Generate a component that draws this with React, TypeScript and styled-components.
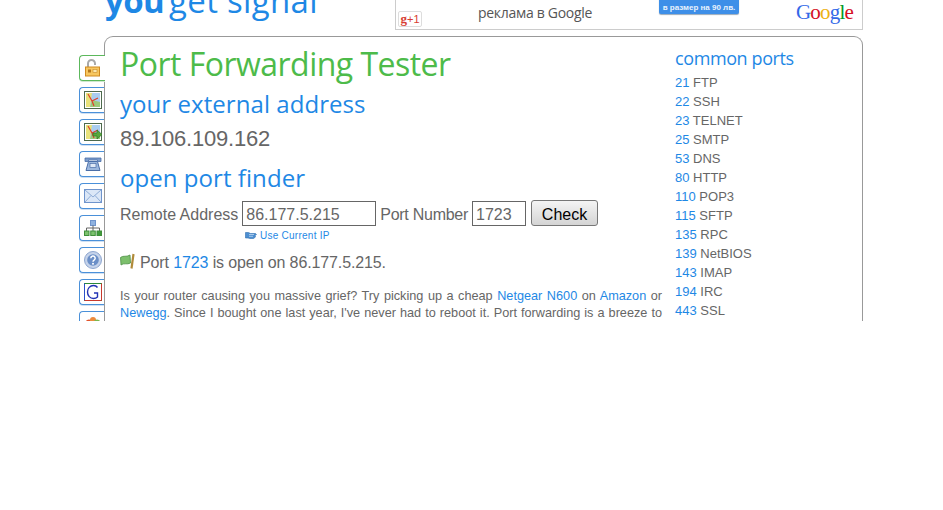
import styled, { createGlobalStyle } from 'styled-components'

const GlobalStyle = createGlobalStyle`
  html, body {
    margin: 0;
    padding: 0;
    background: #fff;
  }
  a {
    color: #1e88e5;
    text-decoration: none;
  }
`

const Page = styled.div`
  width: 943px;
  height: 321px;
  overflow: hidden;
  font-family: "Liberation Sans", Arial, sans-serif;
  color: #666;
`

const Header = styled.header`
  display: flex;
  justify-content: space-between;
  height: 30px;
  margin: 0 80px 6px 105px;
`

const Logo = styled.div`
  font-family: "Open Sans", sans-serif;
  font-size: 33px;
  line-height: 30px;
  margin-top: -14px;
  color: #1e88e5;
  letter-spacing: -0.6px;
  b {
    font-weight: 700;
    margin-right: 5px;
  }
  span {
    font-weight: 400;
    letter-spacing: 0.3px;
  }
`

const AdBox = styled.div`
  position: relative;
  width: 466px;
  height: 29px;
  border: 1px solid #ccc;
  border-top: none;
  overflow: hidden;
  display: flex;
  justify-content: flex-start;
`

const PlusOne = styled.div`
  position: absolute;
  left: 2px;
  bottom: 2px;
  width: 22px;
  height: 14px;
  border: 1px solid #ddd;
  border-radius: 2px;
  font: 400 11px/14px "Liberation Sans", sans-serif;
  color: #d73d32;
  text-align: center;
  b {
    font: 700 13px/14px "Liberation Serif", serif;
  }
`

const AdText = styled.div`
  margin-left: 82px;
  font-family: "Open Sans", sans-serif;
  font-size: 14px;
  line-height: 26px;
  letter-spacing: -0.3px;
  color: #555;
`

const AdButton = styled.div`
  position: absolute;
  left: 263px;
  top: -6px;
  width: 80px;
  height: 20px;
  border-radius: 2px;
  background: #3e8fe8;
  color: #e8f2fd;
  font: 700 8px/21px "Liberation Sans", sans-serif;
  text-align: center;
  box-shadow: 0 1px 1px #9ab;
  span {
    position: relative;
    top: 3px;
  }
`

const GoogleMark = styled.div`
  position: absolute;
  right: 9px;
  top: 0;
  font: 400 21px/24px "Liberation Serif", serif;
  letter-spacing: -0.8px;
`

const GoogleLetter = styled.span<{ $c: string }>`
  color: ${(p) => p.$c};
`

const Body = styled.div`
  display: flex;
  margin-left: 79px;
  width: 784px;
`

const Tabs = styled.nav`
  width: 26px;
  flex: none;
  padding-top: 19px;
  display: flex;
  flex-direction: column;
  gap: 6px;
  margin-right: -1px;
`

const Tab = styled.div<{ $active?: boolean }>`
  box-sizing: border-box;
  width: 26px;
  height: 26px;
  border: 1px solid ${(p) => (p.$active ? '#5cb85c' : '#4a90d9')};
  border-right: none;
  border-radius: 4px 0 0 4px;
  background: #fff;
  display: flex;
  align-items: center;
  justify-content: center;
  box-shadow: 0 1px 0 ${(p) => (p.$active ? '#cfe8cf' : '#cfe0f3')};
  position: relative;
  z-index: ${(p) => (p.$active ? 1 : 0)};
  svg {
    display: block;
  }
`

const Card = styled.main`
  flex: 1;
  min-height: 300px;
  display: flex;
  background: #fff;
  border: 1px solid #999;
  border-bottom: none;
  border-radius: 9px 9px 0 0;
  padding: 0 0 0 15px;
  position: relative;
`

const Content = styled.section`
  width: 542px;
  flex: none;
`

const Title = styled.h1`
  margin: 4px 0 0;
  font-family: "Open Sans", sans-serif;
  font-weight: 400;
  font-size: 32px;
  line-height: 46px;
  letter-spacing: -0.52px;
  color: #4dbb4a;
`

const SectionTitle = styled.h2`
  margin: 0;
  font-family: "Open Sans", sans-serif;
  font-weight: 400;
  font-size: 24px;
  line-height: 34px;
  letter-spacing: 0.06px;
  color: #1e88e5;
`

const Address = styled.div`
  font-size: 22px;
  letter-spacing: -0.2px;
  line-height: 34px;
  margin: 1px 0 5px;
`

const Form = styled.form`
  display: flex;
  align-items: center;
  font-size: 16px;
  height: 28px;
  margin-top: 6px;
`

const TightLabel = styled.span`
  letter-spacing: -0.27px;
`

const Field = styled.input<{ $w: number }>`
  width: ${(p) => p.$w}px;
  height: 25px;
  box-sizing: border-box;
  border: 1px solid #666;
  margin: 0 4px 4px;
  padding: 3px 3px 0;
  font: 16px "Liberation Sans", sans-serif;
  color: #666;
  background: #fff;
  outline: none;
`

const Button = styled.button`
  width: 67px;
  height: 26px;
  margin: 0 0 4px 1px;
  border: 1px solid #777;
  border-radius: 3px;
  background: linear-gradient(#f4f4f4, #d4d4d4);
  font: 16px "Liberation Sans", sans-serif;
  color: #000;
  padding: 3px 0 0;
`

const CurrentIp = styled.a`
  display: flex;
  align-items: center;
  gap: 3px;
  margin: 0 0 0 125px;
  font-size: 10px;
  line-height: 13px;
  letter-spacing: 0.25px;
`

const Result = styled.p`
  display: flex;
  align-items: center;
  margin: 11px 0 0;
  font-size: 16px;
  line-height: 20px;
  letter-spacing: -0.12px;
  white-space: pre;
  svg {
    margin-right: 4px;
    position: relative;
    top: -2px;
  }
`

const Blurb = styled.p`
  margin: 15px 0 0;
  font-size: 12.7px;
  line-height: 17px;
  text-align: justify;
`

const Side = styled.aside`
  margin-left: 13px;
`

const SideTitle = styled.h3`
  margin: 7px 0 1px;
  font-family: "Open Sans", sans-serif;
  font-weight: 400;
  font-size: 18px;
  line-height: 28px;
  letter-spacing: -0.4px;
  color: #1e88e5;
`

const PortList = styled.ul`
  margin: 0;
  padding: 0;
  list-style: none;
  font-size: 13px;
  line-height: 19px;
`

const ports: [number, string][] = [
  [21, 'FTP'],
  [22, 'SSH'],
  [23, 'TELNET'],
  [25, 'SMTP'],
  [53, 'DNS'],
  [80, 'HTTP'],
  [110, 'POP3'],
  [115, 'SFTP'],
  [135, 'RPC'],
  [139, 'NetBIOS'],
  [143, 'IMAP'],
  [194, 'IRC'],
  [443, 'SSL'],
  [445, 'SMB'],
]

const LockIcon = () => (
  <svg width="18" height="18" viewBox="0 0 18 18">
    <path d="M4 8V4.500a3.500 3.500 0 0 1 7 0V6" fill="none" stroke="#a9a9a9" strokeWidth="2" />
    <rect x="1.500" y="8" width="14" height="9" fill="#f7c65f" stroke="#d08a20" />
    <rect x="4" y="10.500" width="3" height="3" fill="#b5761a" />
    <rect x="9" y="10.500" width="4" height="3" fill="#fbe7ae" stroke="#c98a2a" strokeWidth=".6" />
  </svg>
)

const MapIcon = ({ arrow }: { arrow?: boolean }) => (
  <svg width="18" height="18" viewBox="0 0 18 18">
    <rect x=".5" y=".5" width="17" height="17" fill="#fff" stroke="#4d6a4d" />
    <rect x="2" y="2" width="14" height="14" fill="#a9cdf0" />
    <path d="M2 2h6l-2 14H2z" fill="#e8e27a" />
    <path d="M8 9l8 2v5H6z" fill="#9ccb7a" />
    <path d="M4 3l4 7 2 5M8 10l6-3" fill="none" stroke="#e0402a" strokeWidth="1.2" />
    {arrow && <path d="M9 10h4V7l5 4.500-5 4.500v-3H9z" fill="#57a83c" stroke="#2f7a22" strokeWidth=".7" />}
  </svg>
)

const PhoneIcon = () => (
  <svg width="18" height="18" viewBox="0 0 18 18">
    <path d="M1 3h16v3.500h-3.500V5h-9v1.500H1z" fill="#7c9ccc" stroke="#4a6ea8" strokeWidth=".8" />
    <path d="M4.500 6.500h9L16 15.500H2z" fill="#9db8de" stroke="#4a6ea8" />
    <rect x="6" y="8.500" width="6" height="4" fill="#dfe9f6" stroke="#4a6ea8" strokeWidth=".7" />
  </svg>
)

const MailIcon = () => (
  <svg width="18" height="14" viewBox="0 0 18 14">
    <rect x=".5" y=".5" width="17" height="13" fill="#dbe7f7" stroke="#6f94cc" />
    <path d="M1 1l8 7 8-7M1 13l6-6.500M17 13l-6-6.500" fill="none" stroke="#8fadd8" />
  </svg>
)

const NetworkIcon = () => (
  <svg width="18" height="16" viewBox="0 0 18 16">
    <rect x="6.500" y=".5" width="5" height="5" fill="#8fb2e0" stroke="#6f94cc" />
    <path d="M9 5.500V8M2.500 11V8h13v3M9 8v3" fill="none" stroke="#666" />
    <rect x=".5" y="11" width="4.500" height="4.500" fill="#7cc26e" stroke="#3f8f3a" />
    <rect x="6.750" y="11" width="4.500" height="4.500" fill="#7cc26e" stroke="#3f8f3a" />
    <rect x="13" y="11" width="4.500" height="4.500" fill="#3f9a3a" stroke="#3f8f3a" />
  </svg>
)

const HelpIcon = () => (
  <svg width="18" height="18" viewBox="0 0 18 18">
    <circle cx="9" cy="9" r="8.500" fill="#c5d3ea" stroke="#8ea6cf" />
    <circle cx="9" cy="9" r="5.800" fill="#6b8fc7" />
    <path d="M6.800 7.200a2.200 2.200 0 1 1 3.300 1.900c-.8.500-1.100.8-1.100 1.600" fill="none" stroke="#fff" strokeWidth="1.500" />
    <circle cx="9" cy="12.700" r="1" fill="#fff" />
  </svg>
)

const GoogleIcon = () => (
  <svg width="18" height="18" viewBox="0 0 18 18">
    <rect x=".5" y=".5" width="17" height="17" fill="#fff" stroke="#2b8a3a" />
    <path d="M.5 17.500V.5" fill="none" stroke="#2a50c8" />
    <path d="M17.500 .5V17.500H.5" fill="none" stroke="#c93a2e" />
    <path d="M13.500 4.500C12.500 3 11 2.500 9.500 2.500 6 2.500 3.500 5.300 3.500 9s2.500 6.500 6 6.500c1.500 0 3-.5 4-1.500V10H10" fill="none" stroke="#2233b5" strokeWidth="1.400" />
  </svg>
)

const AppsIcon = () => (
  <svg width="18" height="18" viewBox="0 0 18 18">
    <circle cx="5" cy="8" r="3.500" fill="#e2542c" />
    <circle cx="9" cy="5" r="3" fill="#ec8a3c" />
    <circle cx="13" cy="8" r="3.500" fill="#7cb84e" />
  </svg>
)

const FlagIcon = () => (
  <svg width="16" height="17" viewBox="0 0 16 17">
    <path d="M.5 4.500C3.500 2 6 4.500 10 2l.5 8C7 12 4 9.500 1 12z" fill="#7cbf6c" stroke="#4c8f45" strokeWidth=".8" />
    <path d="M13.500 1L11.500 15.500" stroke="#b08a3a" strokeWidth="2.200" />
  </svg>
)

const HandIcon = () => (
  <svg width="12" height="9" viewBox="0 0 12 9">
    <path d="M.5 1.500h3l2 1h5l1 1-1.500 1 .5 1.500-2 1.500H5L3 7H.5z" fill="#4d8fd1" stroke="#2f6fb0" strokeWidth=".6" />
    <path d="M4 3.500h5M4 5.300h4" stroke="#cfe3f7" strokeWidth=".7" />
  </svg>
)

const tabs = [
  <LockIcon key="lock" />,
  <MapIcon key="map" />,
  <MapIcon key="map-arrow" arrow />,
  <PhoneIcon key="phone" />,
  <MailIcon key="mail" />,
  <NetworkIcon key="net" />,
  <HelpIcon key="help" />,
  <GoogleIcon key="google" />,
  <AppsIcon key="apps" />,
]

const App = () => (
  <Page>
    <GlobalStyle />
    <Header>
      <Logo>
        <b>you</b>
        <span>get signal</span>
      </Logo>
      <AdBox>
        <PlusOne>
          <b>g</b>+1
        </PlusOne>
        <AdText>реклама в Google</AdText>
        <AdButton>
          <span>в размер на 90 лв.</span>
        </AdButton>
        <GoogleMark>
          <GoogleLetter $c="#3369e8">G</GoogleLetter>
          <GoogleLetter $c="#d50f25">o</GoogleLetter>
          <GoogleLetter $c="#eeb211">o</GoogleLetter>
          <GoogleLetter $c="#3369e8">g</GoogleLetter>
          <GoogleLetter $c="#009925">l</GoogleLetter>
          <GoogleLetter $c="#d50f25">e</GoogleLetter>
        </GoogleMark>
      </AdBox>
    </Header>
    <Body>
      <Tabs>
        {tabs.map((icon, i) => (
          <Tab key={i} $active={i === 0}>
            {icon}
          </Tab>
        ))}
      </Tabs>
      <Card>
        <Content>
          <Title>Port Forwarding Tester</Title>
          <SectionTitle>your external address</SectionTitle>
          <Address>89.106.109.162</Address>
          <SectionTitle>open port finder</SectionTitle>
          <Form>
            Remote Address
            <Field $w={134} defaultValue="86.177.5.215" />
            <TightLabel>Port Number</TightLabel>
            <Field $w={54} defaultValue="1723" />
            <Button type="button">Check</Button>
          </Form>
          <CurrentIp href="#">
            <HandIcon />
            Use Current IP
          </CurrentIp>
          <Result>
            <FlagIcon />
            Port <a href="#">1723</a> is open on 86.177.5.215.
          </Result>
          <Blurb>
            Is your router causing you massive grief? Try picking up a cheap <a href="#">Netgear N600</a> on{' '}
            <a href="#">Amazon</a> or <a href="#">Newegg</a>. Since I bought one last year, I've never had to reboot
            it. Port forwarding is a breeze to set up and the range has been great throughout the whole house.
          </Blurb>
        </Content>
        <Side>
          <SideTitle>common ports</SideTitle>
          <PortList>
            {ports.map(([port, name]) => (
              <li key={port}>
                <a href="#">{port}</a> {name}
              </li>
            ))}
          </PortList>
        </Side>
      </Card>
    </Body>
  </Page>
)

export default App
